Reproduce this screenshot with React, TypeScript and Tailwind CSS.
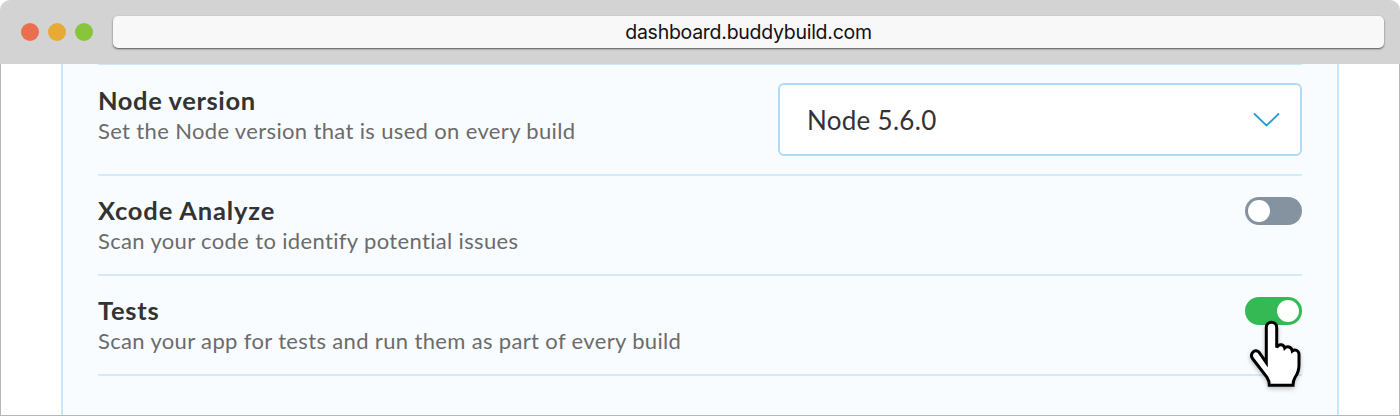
import type { ReactNode } from "react";

function Row({
  title,
  detail,
  className,
  textTop,
  titleTracking,
  children,
}: {
  title: string;
  detail: string;
  className: string;
  textTop: string;
  titleTracking: string;
  children: ReactNode;
}) {
  return (
    <div className={`flex shrink-0 justify-between border-b-2 border-[#d3eaf9] ${className}`}>
      <div className={textTop}>
        <h2 className={`text-[25.5px] leading-[32px] font-bold whitespace-nowrap text-[#333] ${titleTracking}`}>{title}</h2>
        <p className="text-[22px] leading-[30px] tracking-[0.35px] whitespace-nowrap text-[#6b6b6b]">{detail}</p>
      </div>
      {children}
    </div>
  );
}

function Toggle({ on = false }: { on?: boolean }) {
  return (
    <span
      role="switch"
      aria-checked={on}
      className={`mt-[21px] flex h-7 w-[57.5px] items-center rounded-full px-[3px] ${on ? "justify-end bg-[#35b955]" : "justify-start bg-[#85929f]"}`}
    >
      <span className="h-[22px] w-[22px] rounded-full bg-white" />
    </span>
  );
}

function HandCursor() {
  return (
    <svg
      className="absolute top-[39px] left-0 drop-shadow-[0_2px_2px_rgba(0,0,0,0.25)]"
      width="60"
      height="76"
      viewBox="0 0 60 76"
      fill="none"
    >
      <path
        d="M21.3 47.7V12.5C21.3 5.6 31.7 5.6 31.7 12.5V32.5C33.7 28.5 38.5 28.8 39.7 33C42 30.6 46.6 31.8 47.3 36C50.3 33.7 54 35.7 54 39.5V50C54 56 52.5 59 50 62.5C48.5 65 48 67 48 70.3H24.3C24.3 66.8 23.8 65 22 62.3L7.5 43.5C4.3 38.8 10 33.2 13.8 37Z"
        fill="white"
        stroke="black"
        strokeWidth="3"
        strokeLinejoin="miter"
      />
    </svg>
  );
}

export default function App() {
  return (
    <div className="flex h-[416px] w-[1400px] flex-col overflow-hidden bg-white font-['Lato',sans-serif]">
      <header className="flex h-16 shrink-0 items-center rounded-t-[10px] bg-[#d3d3d3] pr-4 pl-[21px]">
        <div className="flex gap-[9px]">
          <span className="h-[18px] w-[18px] rounded-full bg-[#ea6f4e]" />
          <span className="h-[18px] w-[18px] rounded-full bg-[#e7aa37]" />
          <span className="h-[18px] w-[18px] rounded-full bg-[#87c53d]" />
        </div>
        <div className="ml-[20px] flex h-8 flex-1 items-center justify-center rounded-[5px] bg-[#f8f8f8] pt-px font-['Inter',sans-serif] text-[19.5px] tracking-[-0.27px] text-[#111] shadow-[0_1px_2px_rgba(0,0,0,0.6)]">
          dashboard.buddybuild.com
        </div>
      </header>
      <main className="flex min-h-0 flex-1 justify-center border-x border-b border-[#b5b7b9]">
        <section className="flex w-[1278px] flex-col border-x-2 border-[#cce6f9] bg-[#f9fcff] pr-[34.6px] pl-[35px]">
          <div className="h-px shrink-0 bg-[#cde7f7]" />
          <Row title="Node version" detail="Set the Node version that is used on every build" className="h-[111px]" textTop="pt-[19px]" titleTracking="tracking-[0.6px]">
            <button className="mt-[18px] flex h-[73px] w-[524.5px] items-center justify-between rounded-[6px] border-2 border-[#b0d9f3] bg-white pr-[20.5px] pl-[27px] text-[26px] text-[#333]">
              <span className="pt-px tracking-[0.3px]">Node 5.6.0</span>
              <svg width="27" height="16" viewBox="0 0 27 16" fill="none" stroke="#2c9bd4" strokeWidth="1.8">
                <path d="M1 1.5L13.5 13.5L26 1.5" />
              </svg>
            </button>
          </Row>
          <Row title="Xcode Analyze" detail="Scan your code to identify potential issues" className="h-[100px]" textTop="pt-[18px]" titleTracking="tracking-[0.85px]">
            <Toggle />
          </Row>
          <Row title="Tests" detail="Scan your app for tests and run them as part of every build" className="h-[100px]" textTop="pt-[18px]" titleTracking="tracking-[0.75px]">
            <div className="relative">
              <Toggle on />
              <HandCursor />
            </div>
          </Row>
        </section>
      </main>
    </div>
  );
}
